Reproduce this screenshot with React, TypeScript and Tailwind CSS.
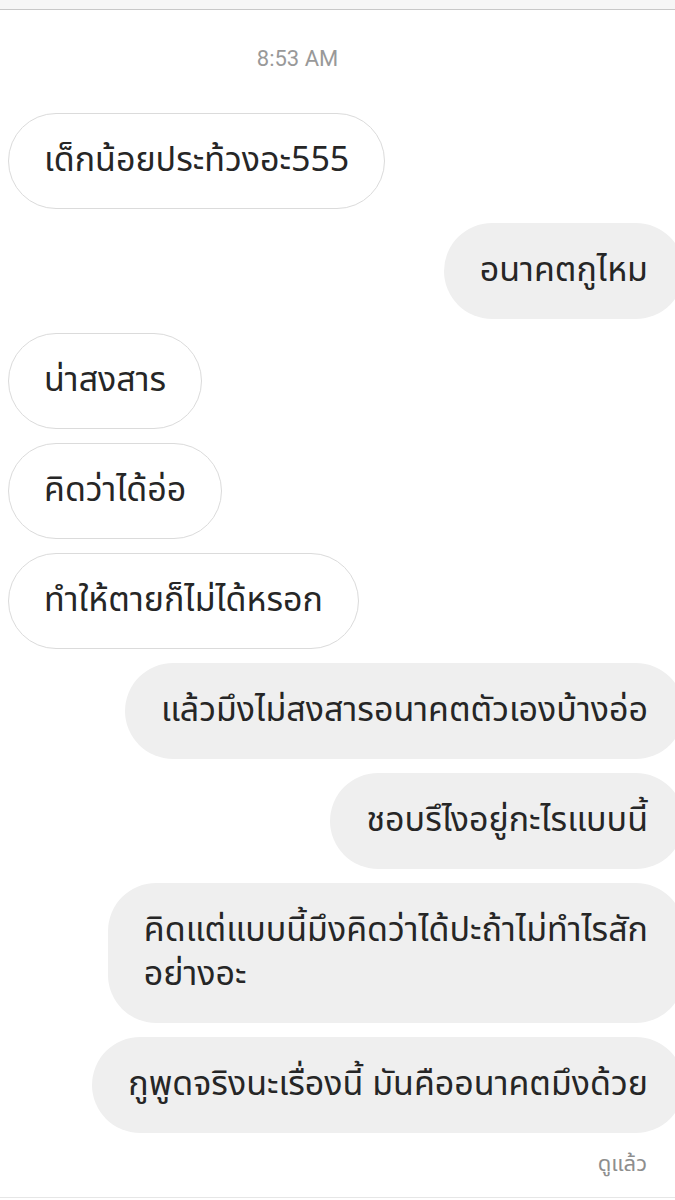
const font = {
  fontFamily: '"Noto Sans Thai", "Noto Sans", "Liberation Sans", sans-serif',
};

type Msg = { text: React.ReactNode; mine?: boolean };

const messages: Msg[] = [
  { text: "เด็กน้อยประท้วงอะ555" },
  { text: "อนาคตกูไหม", mine: true },
  { text: "น่าสงสาร" },
  { text: "คิดว่าได้อ่อ" },
  { text: "ทำให้ตายก็ไม่ได้หรอก" },
  { text: "แล้วมึงไม่สงสารอนาคตตัวเองบ้างอ่อ", mine: true },
  { text: "ชอบรึไงอยู่กะไรแบบนี้", mine: true },
  {
    text: (
      <>
        คิดแต่แบบนี้มึงคิดว่าได้ปะถ้าไม่ทำไรสัก
        <br />
        อย่างอะ
      </>
    ),
    mine: true,
  },
  { text: "กูพูดจริงนะเรื่องนี้ มันคืออนาคตมึงด้วย", mine: true },
];

function Bubble({ text, mine }: Msg) {
  if (mine) {
    return (
      <div className="flex justify-end -mr-[9px]">
        <div className="rounded-[48px] bg-[#efefef] px-[36px] py-[26px] text-[34px] leading-[44px] text-[#262626] whitespace-nowrap">
          {text}
        </div>
      </div>
    );
  }
  return (
    <div className="flex justify-start">
      <div className="rounded-[48px] border border-[#dbdbdb] bg-white px-[35px] py-[25px] text-[34px] leading-[44px] text-[#262626] whitespace-nowrap">
        {text}
      </div>
    </div>
  );
}

export default function App() {
  return (
    <div className="w-[675px] h-[1200px] overflow-hidden bg-white flex flex-col" style={font}>
      <div className="h-[10px] bg-[#f6f6f6] border-b border-[#c8c8c8]" />
      <div className="flex justify-center pt-[36px] pb-[41px] pr-[80px]">
        <span
          className="text-[22px] leading-[26px] text-[#999999]"
          style={{ fontFamily: "Roboto, sans-serif" }}
        >
          8:53 AM
        </span>
      </div>
      <div className="flex flex-col gap-[14px] pl-[8px]">
        {messages.map((m, i) => (
          <Bubble key={i} {...m} />
        ))}
      </div>
      <div className="flex justify-end pr-[28px] pt-[18px]">
        <span className="text-[22px] leading-[28px] text-[#8e8e8e]">ดูแล้ว</span>
      </div>
      <div className="flex-1" />
      <div className="h-[3px] border-t border-[#e6e6e6]" />
    </div>
  );
}
